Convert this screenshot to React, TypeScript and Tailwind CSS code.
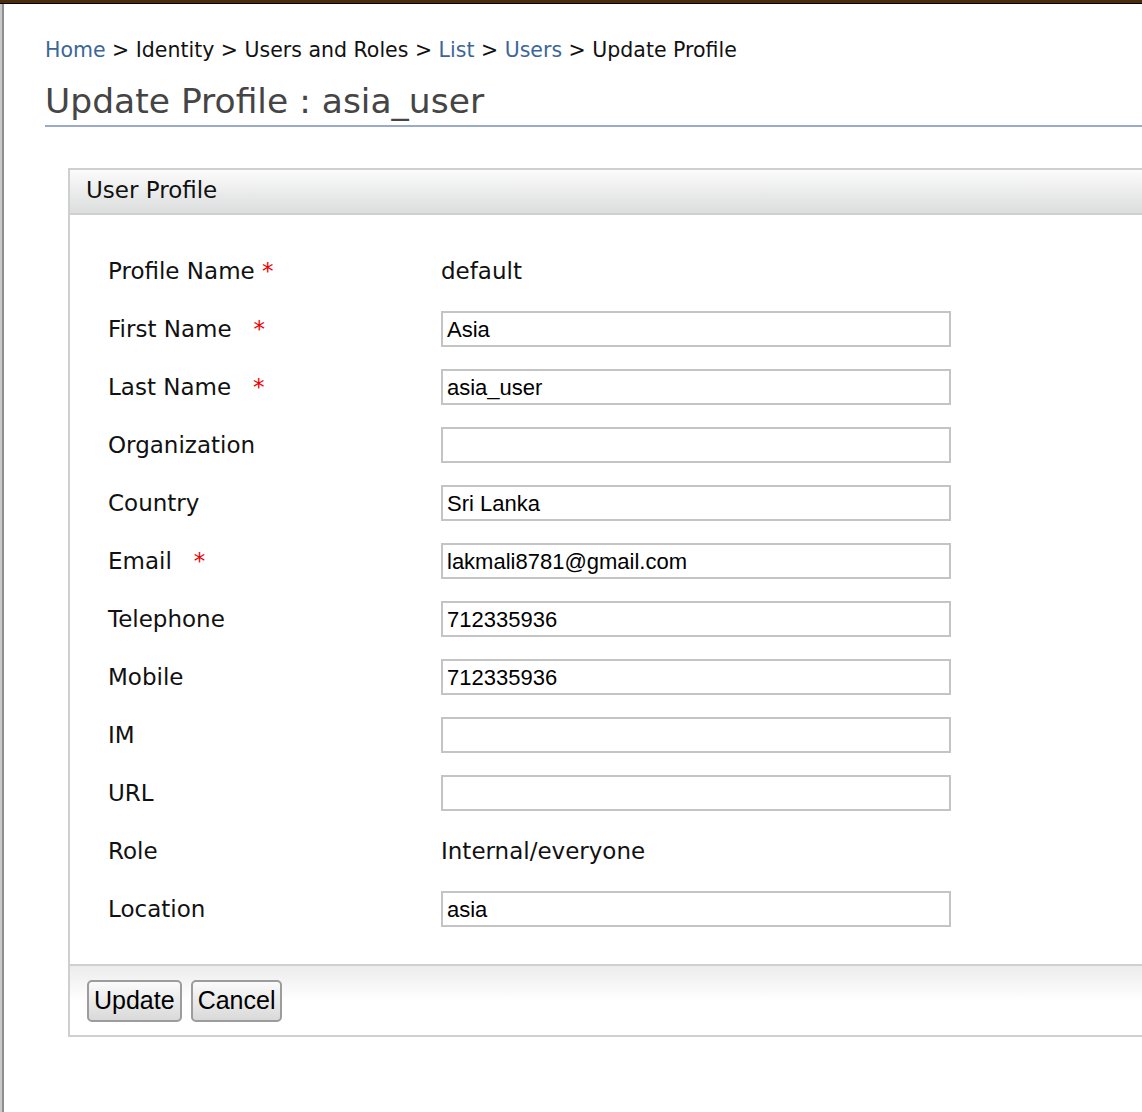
import React from 'react';

const labelFont = { fontFamily: '"DejaVu Sans", Verdana, sans-serif' };

type Field = {
  label: string;
  value: string;
  required?: boolean;
  gap?: boolean;
  input?: boolean;
};

const fields: Field[] = [
  { label: 'Profile Name', value: 'default', required: true },
  { label: 'First Name', value: 'Asia', required: true, gap: true, input: true },
  { label: 'Last Name', value: 'asia_user', required: true, gap: true, input: true },
  { label: 'Organization', value: '', input: true },
  { label: 'Country', value: 'Sri Lanka', input: true },
  { label: 'Email', value: 'lakmali8781@gmail.com', required: true, gap: true, input: true },
  { label: 'Telephone', value: '712335936', input: true },
  { label: 'Mobile', value: '712335936', input: true },
  { label: 'IM', value: '', input: true },
  { label: 'URL', value: '', input: true },
  { label: 'Role', value: 'Internal/everyone' },
  { label: 'Location', value: 'asia', input: true },
];

const Crumb = ({ children, link }: { children: React.ReactNode; link?: boolean }) => (
  <span className={link ? 'text-[#3b6699]' : 'text-[#111]'}>{children}</span>
);

export default function App() {
  return (
    <div className="w-[1142px] h-[1112px] overflow-hidden bg-white flex flex-col" style={labelFont}>
      <div className="h-[4px] bg-[#4d2c0a] border-b border-black shrink-0" />
      <div className="flex flex-1 min-h-0">
        <div className="w-[4px] shrink-0 flex">
          <div className="w-[2px] bg-[#c9c9c9]" />
          <div className="w-[2px] bg-[#8f8f8f]" />
        </div>
        <div className="flex-1 pl-[41px] min-w-0">
          <div className="pt-[31px] text-[20.5px] leading-[30px] whitespace-nowrap">
            <Crumb link>Home</Crumb>
            <Crumb> &gt; Identity &gt; Users and Roles &gt; </Crumb>
            <Crumb link>List</Crumb>
            <Crumb> &gt; </Crumb>
            <Crumb link>Users</Crumb>
            <Crumb> &gt; Update Profile</Crumb>
          </div>
          <div className="border-b-2 border-[#9aabc9] pb-[2px] mt-[14px]">
            <h1 className="text-[34.5px] leading-[44px] text-[#454545] whitespace-nowrap">
              Update Profile : asia_user
            </h1>
          </div>

          <div className="mt-[41px] ml-[23px] w-[1100px] border-2 border-[#cfcfcf]">
            <div className="h-[45px] bg-gradient-to-b from-[#fbfbfb] to-[#dcdddd] border-b-2 border-[#cfcfcf] pl-[16px] flex items-center">
              <span className="text-[23px] text-[#111] -mt-[2px]">User Profile</span>
            </div>

            <div className="pt-[27px] pb-[26px] pl-[38px]">
              {fields.map((f) => (
                <div key={f.label} className="h-[58px] flex items-center">
                  <div className="w-[333px] text-[23px] text-[#111] whitespace-pre">
                    {f.label}
                    {f.required && (
                      <span className="text-[#ee0000]">{f.gap ? '   *' : ' *'}</span>
                    )}
                  </div>
                  {f.input ? (
                    <div
                      className="w-[510px] h-[36px] border-2 border-[#c4c4c4] flex items-center pl-[4px] text-[22px] text-black"
                      style={{ fontFamily: '"Liberation Sans", Arial, sans-serif' }}
                    >
                      {f.value}
                    </div>
                  ) : (
                    <div className="text-[23px] text-[#111]">{f.value}</div>
                  )}
                </div>
              ))}
            </div>

            <div className="border-t-2 border-[#cfcfcf] bg-gradient-to-b from-[#ececec] via-white to-white h-[71px] pl-[17px] flex items-center gap-[9px]">
              {['Update', 'Cancel'].map((b) => (
                <button
                  key={b}
                  className="h-[42px] px-[5px] rounded-[5px] border-2 border-[#9c9c9c] bg-gradient-to-b from-[#fbfbfb] to-[#d9d9d9] text-[25px] leading-none text-black"
                  style={{ fontFamily: '"Liberation Sans", Arial, sans-serif' }}
                >
                  {b}
                </button>
              ))}
            </div>
          </div>
        </div>
      </div>
    </div>
  );
}
